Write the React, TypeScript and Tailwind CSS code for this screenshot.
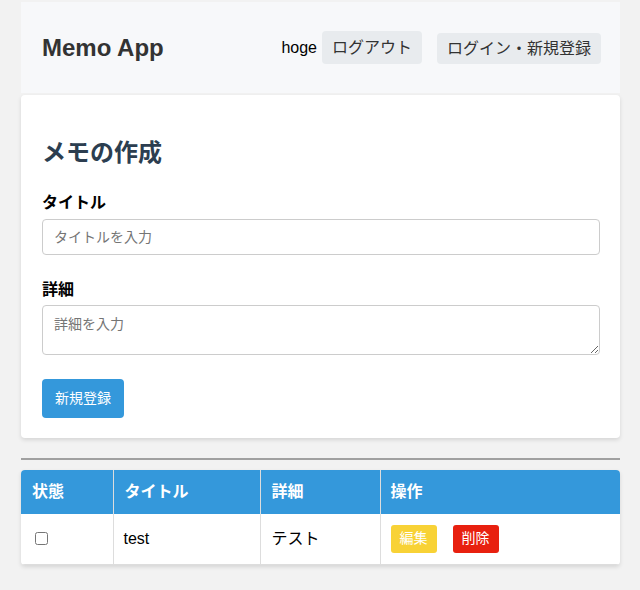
import React from "react";

const memos = [{ id: 1, done: false, title: "test", detail: "テスト" }];

const App = () => {
  return (
    <div className="min-h-[590px] bg-[#f2f2f2] pt-[2px] font-['Liberation_Sans','Noto_Sans_CJK_JP',sans-serif] text-black">
      <div className="ml-[21px] w-[599px]">
        {/* header */}
        <header className="flex h-[91px] items-center justify-between bg-[#f7f8fa] pl-[21px] pr-[19px]">
          <h1 className="text-[24px] font-bold text-[#333]">Memo App</h1>
          <div className="flex items-center gap-[15px]">
            <div className="flex items-center gap-[5px]">
              <span className="text-[16px]">hoge</span>
              <button className="h-[33px] rounded-[4px] bg-[#e8ebee] px-[10px] text-[16px] text-[#333]">
                ログアウト
              </button>
            </div>
            <button className="mt-[2px] h-[31px] rounded-[4px] bg-[#e8ebee] px-[10px] text-[16px] text-[#333]">
              ログイン・新規登録
            </button>
          </div>
        </header>

        {/* form card */}
        <section className="mt-[2px] rounded-[4px] bg-white pb-[20px] pl-[21px] pr-[20px] pt-[40px] shadow-[0_2px_4px_rgba(0,0,0,0.12)]">
          <h2 className="mb-[20px] text-[24px] font-bold text-[#2c3e50]">メモの作成</h2>
          <label className="block text-[16px] font-bold">タイトル</label>
          <input
            className="mt-[4px] block h-[36px] w-full rounded-[4px] border border-[#ccc] px-[11px] text-[14px] placeholder:text-[#757575]"
            placeholder="タイトルを入力"
          />
          <label className="mt-[23px] block text-[16px] font-bold">詳細</label>
          <textarea
            className="mt-[3px] block h-[50px] w-full rounded-[4px] border border-[#ccc] px-[11px] py-[8px] text-[14px] placeholder:text-[#757575]"
            placeholder="詳細を入力"
          />
          <button className="mt-[24px] h-[39px] rounded-[4px] bg-[#3498db] px-[13px] text-[14px] text-white">
            新規登録
          </button>
        </section>

        <hr className="mt-[20px] border-t-2 border-[#a0a0a0]" />

        {/* list */}
        <table className="mt-[10px] w-full border-collapse overflow-hidden rounded-[4px] bg-white text-left shadow-[0_2px_4px_rgba(0,0,0,0.12)]">
          <thead>
            <tr className="h-[44px] bg-[#3498db] text-[16px] text-white">
              <th className="w-[92px] border-r border-[#ddd] px-[11px] font-bold">状態</th>
              <th className="w-[147px] border-r border-[#ddd] px-[11px] font-bold">タイトル</th>
              <th className="w-[120px] border-r border-[#ddd] px-[11px] font-bold">詳細</th>
              <th className="px-[10px] font-bold">操作</th>
            </tr>
          </thead>
          <tbody>
            {memos.map((m) => (
              <tr key={m.id} className="h-[50px] border-b border-[#ddd]">
                <td className="border-r border-[#ddd] px-[14px]">
                  <input type="checkbox" defaultChecked={m.done} className="block h-[13px] w-[13px]" />
                </td>
                <td className="border-r border-[#ddd] px-[10px] text-[16px]">{m.title}</td>
                <td className="border-r border-[#ddd] px-[11px] text-[16px]">{m.detail}</td>
                <td className="px-[10px]">
                  <div className="flex gap-[16px]">
                    <button className="h-[28px] rounded-[3px] bg-[#f8d236] px-[9px] text-[14px] text-white">
                      編集
                    </button>
                    <button className="h-[28px] rounded-[3px] bg-[#e8200f] px-[9px] text-[14px] text-white">
                      削除
                    </button>
                  </div>
                </td>
              </tr>
            ))}
          </tbody>
        </table>
      </div>
    </div>
  );
};

export default App;
